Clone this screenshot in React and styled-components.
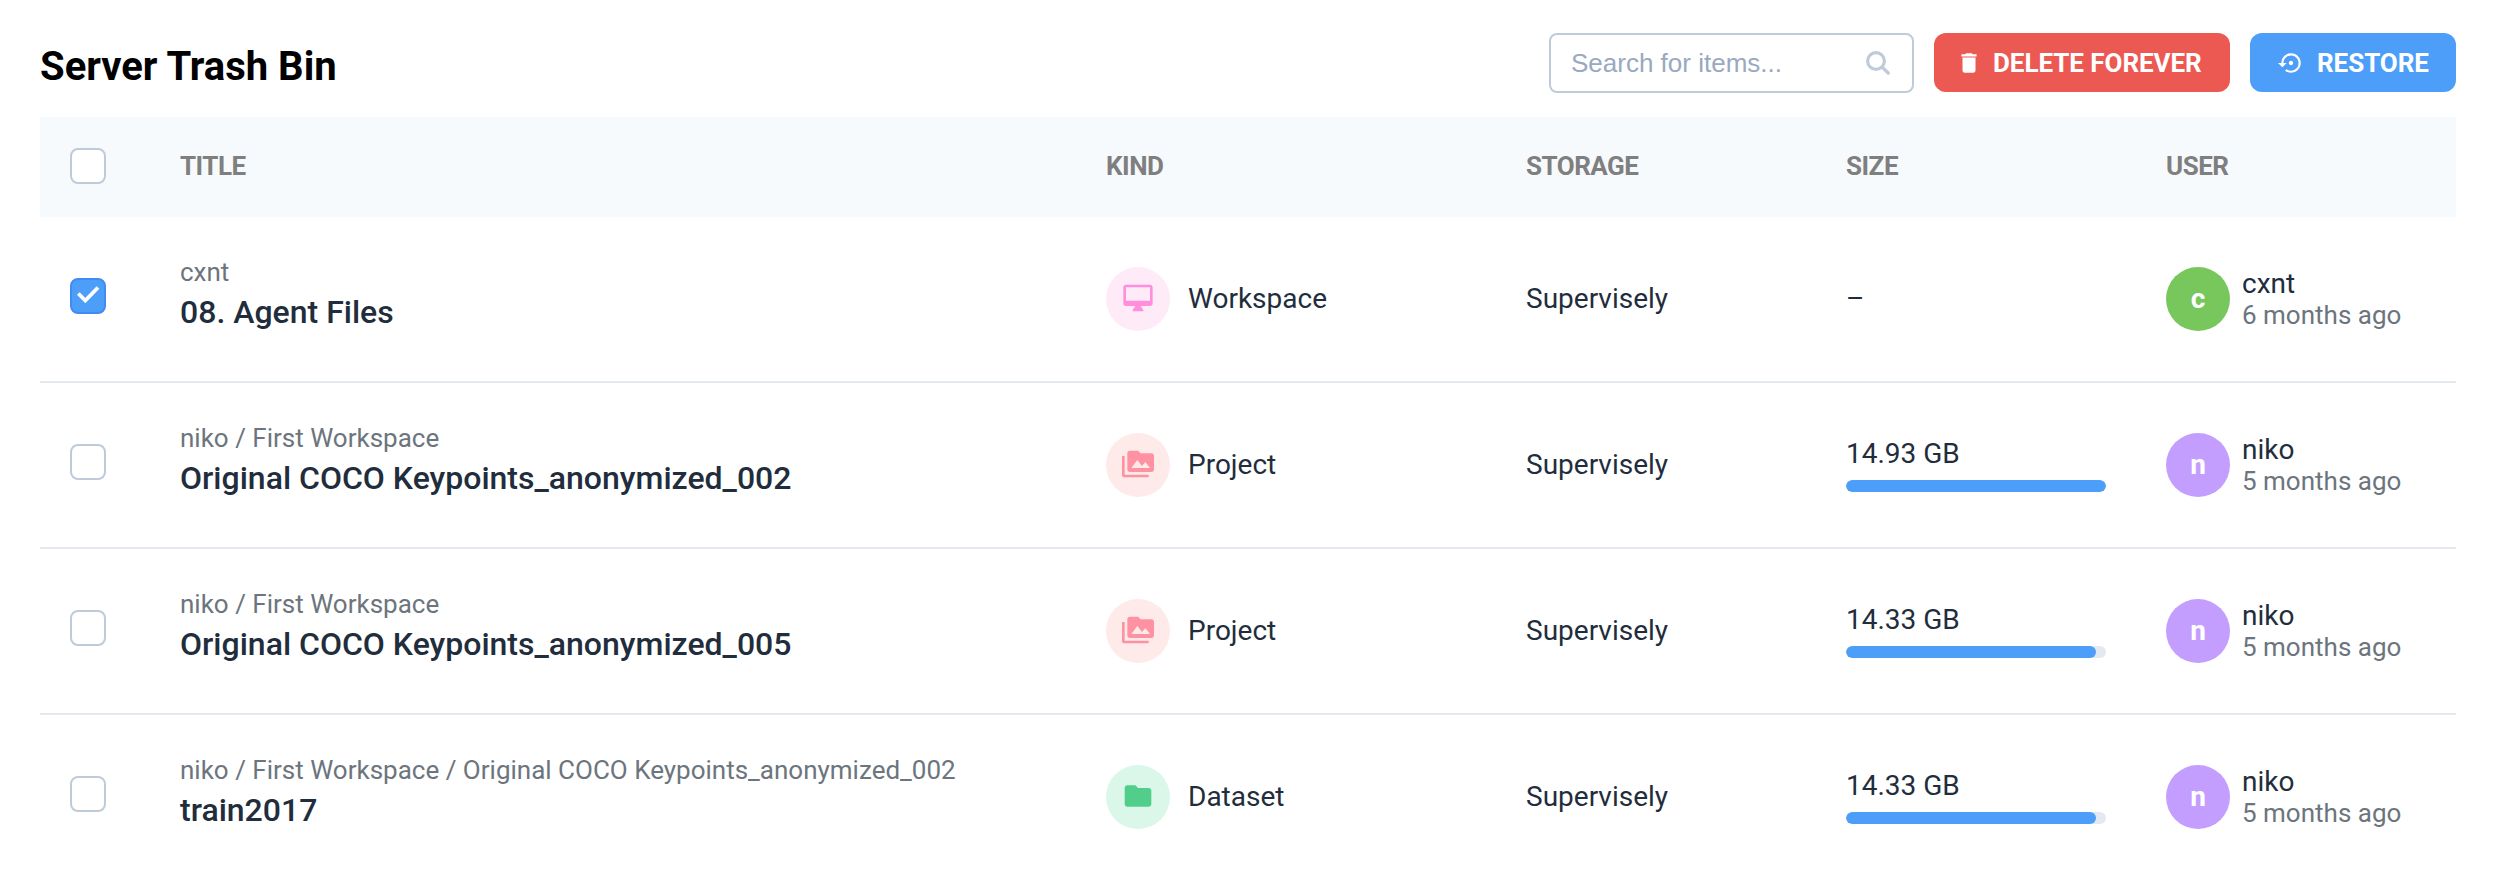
import React from "react";
import styled, { createGlobalStyle } from "styled-components";
import { MdDelete, MdSettingsBackupRestore, MdFolder } from "react-icons/md";

const GlobalStyle = createGlobalStyle`
  *, *::before, *::after { box-sizing: border-box; }
  body { margin: 0; background: #fff; color: #1f2d3d; font-family: Roboto, "Liberation Sans", sans-serif; font-size: 28px; overflow: hidden; }
`;

const Page = styled.main`
  height: 878px;
  padding: 33px 50px 0 40px;
  overflow: hidden;
`;

const Toolbar = styled.header`
  display: flex;
  gap: 20px;
  height: 84px;
  align-items: flex-start;
`;

const Heading = styled.h1`
  flex: 1;
  margin: 11px 0 0;
  font-size: 40px;
  line-height: 46px;
  font-weight: 700;
  color: #000;
`;

const SearchBox = styled.label`
  display: flex;
  align-items: center;
  justify-content: space-between;
  width: 365px;
  height: 60px;
  padding: 0 22px 0 20px;
  border: 2px solid #bfcbd9;
  border-radius: 8px;
`;

const SearchInput = styled.input`
  width: 240px;
  padding: 0;
  border: 0;
  outline: 0;
  background: none;
  font: 26px "Liberation Sans", sans-serif;
  &::placeholder { color: #99a9bf; opacity: 1; }
`;

const Button = styled.button`
  display: flex;
  align-items: center;
  width: ${(p) => p.$width}px;
  height: 59px;
  padding: 0 0 0 ${(p) => p.$pad}px;
  gap: ${(p) => p.$gap}px;
  border: 0;
  border-radius: 12px;
  background: ${(p) => p.$color};
  color: #fff;
  font: 700 26px Roboto, sans-serif;
  letter-spacing: -0.05px;
  white-space: nowrap;
`;

const columns = "110px 926px 420px 320px 320px 320px";

const HeadRow = styled.div`
  display: grid;
  grid-template-columns: ${columns};
  align-items: center;
  height: 100px;
  padding-bottom: 2px;
  background: #f6fafd;
  color: #7f7f7f;
  font-size: 26px;
  font-weight: 700;
  letter-spacing: -0.5px;
`;

const Row = styled.div`
  display: grid;
  grid-template-columns: ${columns};
  align-items: center;
  height: 166px;
  line-height: 32px;
  border-bottom: 2px solid #e4e9f0;
`;

const Cell = styled.div`
  padding: 0 30px;
  white-space: nowrap;
`;

const CheckCell = styled(Cell)`
  padding-bottom: ${(p) => (p.$raised ? 6 : 0)}px;
`;

const Checkbox = styled.span`
  display: flex;
  align-items: center;
  justify-content: center;
  width: 36px;
  height: 36px;
  border: 2px solid ${(p) => (p.$checked ? "#3f8cf5" : "#bfcbd9")};
  border-radius: 8px;
  background: ${(p) => (p.$checked ? "#4d9ef9" : "#fff")};
`;

const Path = styled.div`
  font-size: 26px;
  line-height: 36px;
  color: #6c757d;
`;

const Title = styled.div`
  font-size: 32px;
  line-height: 44px;
  font-weight: 500;
  padding-bottom: 10px;
`;

const KindCell = styled(Cell)`
  display: flex;
  align-items: center;
  gap: 18px;
`;

const Disc = styled.span`
  display: flex;
  flex: none;
  align-items: center;
  justify-content: center;
  width: 64px;
  height: 64px;
  border-radius: 50%;
  background: ${(p) => p.$bg};
  color: ${(p) => p.$fg};
  font-size: 28px;
  font-weight: 700;

  svg { margin-bottom: 2px; }
`;

const Bar = styled.div`
  height: 12px;
  margin-top: 10px;
  border-radius: 6px;
  background: #e4e8f1;
  overflow: hidden;
`;

const BarFill = styled.div`
  height: 12px;
  border-radius: 6px;
  background: #4d9ef9;
`;

const UserCell = styled(Cell)`
  display: flex;
  align-items: center;
  gap: 12px;
`;

const UserName = styled.div`
  line-height: 33px;
`;

const Ago = styled.div`
  font-size: 26px;
  line-height: 31px;
  color: #6c757d;
`;

function Monitor() {
  return (
    <svg width="32" height="32" viewBox="0 0 24 24" fill="currentColor">
      <path d="M21 14H3V4H21M21 2H3C1.89 2 1 2.89 1 4V16A2 2 0 0 0 3 18H10L8 21V22H16V21L14 18H21A2 2 0 0 0 23 16V4C23 2.89 22.1 2 21 2Z" />
    </svg>
  );
}

function FolderImages() {
  return (
    <svg width="32" height="32" viewBox="0 0 24 24" fill="currentColor">
      <path d="M7 15 11.5 9 15 13.5 17.5 10.5 21 15M22 4H14L12 2H6A2 2 0 0 0 4 4V16A2 2 0 0 0 6 18H22A2 2 0 0 0 24 16V6A2 2 0 0 0 22 4M2 6H0V20A2 2 0 0 0 2 22H20V20H2V6Z" />
    </svg>
  );
}

function SearchIcon() {
  return (
    <svg width="24" height="24" viewBox="0 0 24 24" fill="none" stroke="#bfcbd9" strokeLinecap="round">
      <circle cx="10" cy="10" r="8.4" strokeWidth="3.1" />
      <path d="M16.4 16.4 22.2 22" strokeWidth="3.4" />
    </svg>
  );
}

function Tick() {
  return (
    <svg width="24" height="24" viewBox="0 0 24 24" fill="none" stroke="#fff" strokeWidth="3.8">
      <path d="M2.3 9.5 9.3 16.5 22 3.5" />
    </svg>
  );
}

const kinds = {
  Workspace: { bg: "#ffeaf7", fg: "#ff8fdd", icon: <Monitor /> },
  Project: { bg: "#ffeaea", fg: "#ff92a2", icon: <FolderImages /> },
  Dataset: { bg: "#dbf7ea", fg: "#51ce8a", icon: <MdFolder size={32} /> },
};

const items = [
  { path: "cxnt", title: "08. Agent Files", kind: "Workspace", user: "cxnt", ago: "6 months ago", color: "#78c75d", checked: true },
  { path: "niko / First Workspace", title: "Original COCO Keypoints_anonymized_002", kind: "Project", size: "14.93 GB", share: 100, user: "niko", ago: "5 months ago", color: "#c39eff" },
  { path: "niko / First Workspace", title: "Original COCO Keypoints_anonymized_005", kind: "Project", size: "14.33 GB", share: 96, user: "niko", ago: "5 months ago", color: "#c39eff" },
  { path: "niko / First Workspace / Original COCO Keypoints_anonymized_002", title: "train2017", kind: "Dataset", size: "14.33 GB", share: 96, user: "niko", ago: "5 months ago", color: "#c39eff" },
];

export default function App() {
  return (
    <Page>
      <GlobalStyle />
      <Toolbar>
        <Heading>Server Trash Bin</Heading>
        <SearchBox>
          <SearchInput placeholder="Search for items..." />
          <SearchIcon />
        </SearchBox>
        <Button $color="#ec5953" $width={296} $pad={22} $gap={11}>
          <MdDelete size={26} />
          DELETE FOREVER
        </Button>
        <Button $color="#4d9ef9" $width={206} $pad={28} $gap={13}>
          <MdSettingsBackupRestore size={26} />
          RESTORE
        </Button>
      </Toolbar>
      <HeadRow>
        <CheckCell><Checkbox /></CheckCell>
        <Cell>TITLE</Cell>
        <Cell>KIND</Cell>
        <Cell>STORAGE</Cell>
        <Cell>SIZE</Cell>
        <Cell>USER</Cell>
      </HeadRow>
      {items.map((item) => {
        const kind = kinds[item.kind];
        return (
          <Row key={item.title}>
            <CheckCell $raised>
              <Checkbox $checked={item.checked}>{item.checked && <Tick />}</Checkbox>
            </CheckCell>
            <Cell>
              <Path>{item.path}</Path>
              <Title>{item.title}</Title>
            </Cell>
            <KindCell>
              <Disc $bg={kind.bg} $fg={kind.fg}>{kind.icon}</Disc>
              {item.kind}
            </KindCell>
            <Cell>Supervisely</Cell>
            <Cell>
              {item.size ? (
                <>
                  <div>{item.size}</div>
                  <Bar><BarFill style={{ width: `${item.share}%` }} /></Bar>
                </>
              ) : "–"}
            </Cell>
            <UserCell>
              <Disc $bg={item.color} $fg="#fff">{item.user[0]}</Disc>
              <div>
                <UserName>{item.user}</UserName>
                <Ago>{item.ago}</Ago>
              </div>
            </UserCell>
          </Row>
        );
      })}
    </Page>
  );
}
